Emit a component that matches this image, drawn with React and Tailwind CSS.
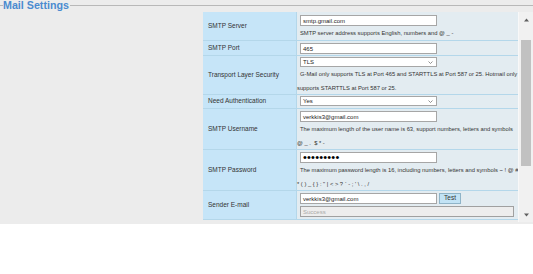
import React from "react";

function Field({ value, children }) {
  return (
    <div className="ml-[3px] flex h-[11px] w-[137px] shrink-0 items-center border border-[#a6a6a6] bg-white pl-[2px] text-[6px] leading-none text-[#222]">
      {children || value}
    </div>
  );
}

function Select({ value }) {
  return (
    <div className="ml-[3px] flex h-[10px] w-[137px] shrink-0 items-center justify-between border border-[#a6a6a6] bg-white pl-[2px] pr-[3px] text-[6px] leading-none text-[#222]">
      <span>{value}</span>
      <svg width="5" height="3" viewBox="0 0 5 3">
        <path d="M0.5 0.5 L2.5 2.5 L4.5 0.5" fill="none" stroke="#777" strokeWidth="0.8" />
      </svg>
    </div>
  );
}

function Row({ label, h, children, pt = "pt-[2px]" }) {
  return (
    <div className={`flex ${h} shrink-0 border-b border-[#b4d7ea]`}>
      <div className="flex w-[94px] shrink-0 items-center border-r border-[#b4d7ea] bg-[#c6e5f8] pl-[5px] text-[6.5px] leading-none text-[#333]">
        {label}
      </div>
      <div className={`flex min-w-0 flex-1 flex-col bg-[#e3ecf1] ${pt}`}>{children}</div>
    </div>
  );
}

function Line({ children, first }) {
  return (
    <div className={`whitespace-pre text-[5.8px] leading-[14px] text-[#333] ${first ? "pl-[3px]" : ""}`}>
      {children}
    </div>
  );
}

function Scrollbar() {
  return (
    <div className="flex w-[15px] shrink-0 flex-col border-l border-[#f8f8f8] bg-[#f1f1f1]">
      <div className="flex h-[15px] items-center justify-center">
        <svg width="5" height="4" viewBox="0 0 5 4">
          <path d="M0 3.5 L2.5 0.5 L5 3.5 Z" fill="#606060" />
        </svg>
      </div>
      <div className="flex flex-1 flex-col px-[2px]">
        <div className="mt-[13px] h-[126px] bg-[#c1c1c1]" />
      </div>
      <div className="flex h-[15px] items-center justify-center">
        <svg width="5" height="4" viewBox="0 0 5 4">
          <path d="M0 0.5 L2.5 3.5 L5 0.5 Z" fill="#606060" />
        </svg>
      </div>
    </div>
  );
}

export default function App() {
  return (
    <div className="h-[274px] w-[533px] overflow-hidden bg-white font-['Liberation_Sans',Arial,sans-serif]">
      <div className="flex h-[224px] flex-col bg-[#ececec]">
        <div className="flex h-[11px] items-center">
          <div className="h-px w-[3px] bg-[#b8b8b8]" />
          <div className="text-[10.7px] font-bold leading-[11px] text-[#4a8bd0]">Mail Settings</div>
          <div className="ml-[1px] h-px flex-1 bg-[#b8b8b8]" />
        </div>
        <div className="ml-[203px] mt-[1px] flex h-[210px] w-[330px] overflow-hidden">
          <div className="flex w-[315px] flex-col">
            <Row label="SMTP Server" h="h-[29px]" pt="pt-[3px]">
              <Field value="smtp.gmail.com" />
              <Line first>SMTP server address supports English, numbers and @ _ -</Line>
            </Row>
            <Row label="SMTP Port" h="h-[15px]" pt="pt-[2px]">
              <Field value="465" />
            </Row>
            <Row label="Transport Layer Security" h="h-[39px]" pt="pt-[1px]">
              <Select value="TLS" />
              <Line first>G-Mail only supports TLS at Port 465 and STARTTLS at Port 587 or 25. Hotmail only</Line>
              <Line>supports STARTTLS at Port 587 or 25.</Line>
            </Row>
            <Row label="Need Authentication" h="h-[14px]" pt="pt-[1px]">
              <Select value="Yes" />
            </Row>
            <Row label="SMTP Username" h="h-[41px]" pt="pt-[2px]">
              <Field value="verkkis3@gmail.com" />
              <Line first>The maximum length of the user name is 63, support numbers, letters and symbols</Line>
              <Line>{"@ _ .  $ * -"}</Line>
            </Row>
            <Row label="SMTP Password" h="h-[41px]" pt="pt-[2px]">
              <Field>
                <span className="text-[11px] leading-[9px] tracking-[0.2px] text-black">•••••••••</span>
              </Field>
              <Line first>The maximum password length is 16, including numbers, letters and symbols ~ ! @ #</Line>
              <Line>{"* ( ) _ { } : \" | < > ? ` - ; ' \\ . , /"}</Line>
            </Row>
            <Row label="Sender E-mail" h="h-[29px]" pt="pt-[2px]">
              <div className="flex items-center">
                <Field value="verkkis3@gmail.com" />
                <div className="ml-[2px] flex h-[11px] w-[22px] items-center justify-center border border-[#8fb4c8] bg-[#c2e3f5] text-[6.5px] leading-none text-[#333]">
                  Test
                </div>
              </div>
              <div className="ml-[3px] mt-[2px] flex h-[11px] w-[214px] items-center border border-[#a0a0a0] bg-[#ededed] pl-[2px] text-[6px] leading-none text-[#aaa]">
                Success
              </div>
            </Row>
          </div>
          <Scrollbar />
        </div>
      </div>
    </div>
  );
}
